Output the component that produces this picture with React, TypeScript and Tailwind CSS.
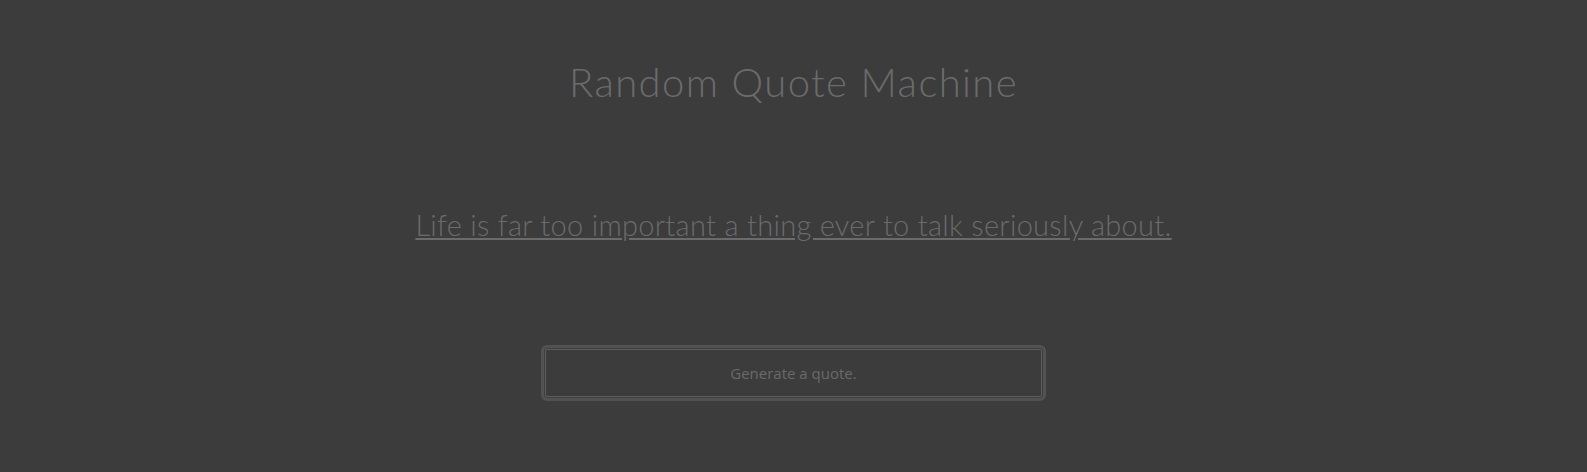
export default function App() {
  return (
    <div className="min-h-[472px] w-full bg-[#3c3c3c] flex flex-col items-center font-['Lato',sans-serif]">
      <h1 className="mt-[56px] text-[40px] leading-[52px] text-[#6b6b6b] font-light tracking-[1.4px]">
        Random Quote Machine
      </h1>
      <a href="#" className="mt-[97px] text-[29px] leading-[40px] text-[#6b6b6b] underline font-light tracking-[0.3px]">
        Life is far too important a thing ever to talk seriously about.
      </a>
      <button className="mt-[100px] w-[505px] h-[56px] rounded-[6px] border-[3px] border-[#525252] bg-[#3c3c3c] shadow-[inset_0_0_0_1px_#3f3f3f,inset_0_0_0_2px_#5c5c5c] text-[15px] text-[#6a6a6a] font-['Open_Sans',sans-serif]">
        Generate a quote.
      </button>
    </div>
  );
}
